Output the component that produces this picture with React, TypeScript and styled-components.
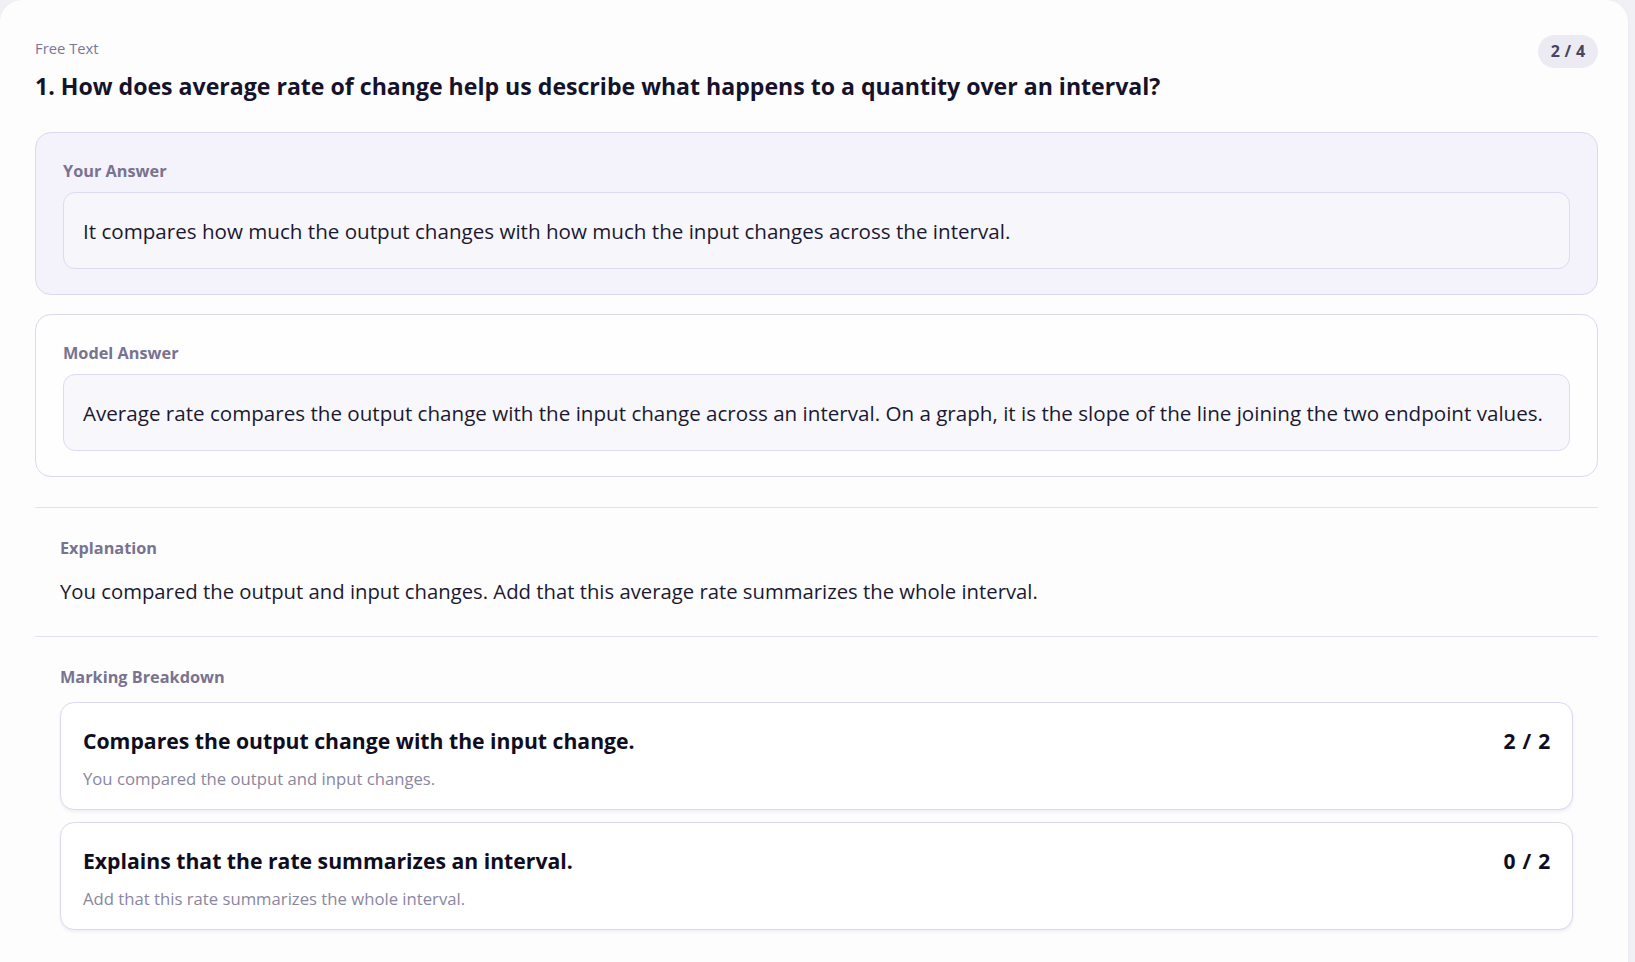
import React from "react";
import styled, { createGlobalStyle } from "styled-components";

const GlobalStyle = createGlobalStyle`
  html, body {
    margin: 0;
    padding: 0;
    background: #f1f1f5;
  }
  body {
    font-family: "Open Sans", "Noto Sans", sans-serif;
    -webkit-font-smoothing: antialiased;
  }
  * { box-sizing: border-box; }
`;

const Card = styled.main`
  width: 1628px;
  min-height: 957px;
  background: #fdfdfe;
  border-radius: 22px;
  padding: 38px 30px 28px 35px;
  box-shadow: 0 1px 4px rgba(40, 30, 90, 0.05);
`;

const Header = styled.header`
  display: flex;
  justify-content: space-between;
  align-items: flex-start;
  margin-bottom: 30px;
`;

const HeaderText = styled.div`
  display: flex;
  flex-direction: column;
  gap: 12px;
`;

const Kind = styled.div`
  font-size: 14.8px;
  line-height: 20px;
  color: #7b7791;
`;

const Title = styled.h1`
  margin: 0;
  font-size: 23.1px;
  line-height: 32px;
  font-weight: 700;
  color: #15122b;
`;

const Badge = styled.span`
  margin-top: -3px;
  height: 33px;
  min-width: 60px;
  padding: 0 12px;
  border-radius: 17px;
  background: #ecebf3;
  color: #48445f;
  font-size: 16px;
  font-weight: 700;
  line-height: 33px;
  text-align: center;
  letter-spacing: 0.3px;
`;

const AnswerCard = styled.section<{ $tinted?: boolean }>`
  border: 1px solid #dcd8f0;
  border-radius: 16px;
  background: ${(p) => (p.$tinted ? "#f4f2fb" : "#fefeff")};
  padding: 27px 27px 25px 27px;
  & + & {
    margin-top: 19px;
  }
`;

const Label = styled.div`
  font-size: 16.3px;
  line-height: 22px;
  font-weight: 700;
  color: #78738f;
`;

const AnswerBox = styled.div<{ $tinted?: boolean }>`
  margin-top: 10px;
  border: 1px solid #dedaf0;
  border-radius: 12px;
  background: ${(p) => (p.$tinted ? "#f7f6fb" : "#f8f7fc")};
  padding: 23.5px 19px;
  font-size: 20.6px;
  line-height: 28px;
  color: #1b1930;
`;

const Divider = styled.hr<{ $flush?: boolean }>`
  margin: ${(p) => (p.$flush ? "0" : "30px 0 0")};
  border: 0;
  border-top: 1px solid #e5e2ef;
`;

const Section = styled.section`
  padding: 29px 25px 31px;
`;

const BodyText = styled.p`
  margin: 18px 0 0;
  font-size: 20.3px;
  line-height: 28px;
  color: #1b1930;
`;

const Criteria = styled.div`
  margin-top: 14px;
  display: flex;
  flex-direction: column;
  gap: 12px;
`;

const Criterion = styled.div`
  border: 1px solid #dcd8ef;
  border-radius: 14px;
  background: #ffffff;
  padding: 24px 21px 19px 22px;
  box-shadow: 0 2px 3px rgba(70, 60, 140, 0.08);
`;

const CriterionHead = styled.div`
  display: flex;
  justify-content: space-between;
  align-items: flex-start;
  gap: 24px;
`;

const CriterionTitle = styled.div`
  font-size: 21.2px;
  line-height: 28px;
  font-weight: 700;
  color: #0f0d20;
`;

const Score = styled.div`
  font-size: 21px;
  line-height: 28px;
  font-weight: 700;
  color: #0f0d20;
  white-space: nowrap;
  letter-spacing: 0.8px;
`;

const CriterionNote = styled.div`
  margin-top: 13px;
  font-size: 16.7px;
  line-height: 22px;
  color: #8a86a0;
`;

const criteria = [
  {
    title: "Compares the output change with the input change.",
    note: "You compared the output and input changes.",
    score: "2 / 2",
  },
  {
    title: "Explains that the rate summarizes an interval.",
    note: "Add that this rate summarizes the whole interval.",
    score: "0 / 2",
  },
];

export default function App() {
  return (
    <>
      <GlobalStyle />
      <Card>
        <Header>
          <HeaderText>
            <Kind>Free Text</Kind>
            <Title>
              1. How does average rate of change help us describe what happens to a quantity over an interval?
            </Title>
          </HeaderText>
          <Badge>2 / 4</Badge>
        </Header>

        <AnswerCard $tinted>
          <Label>Your Answer</Label>
          <AnswerBox $tinted>
            It compares how much the output changes with how much the input changes across the interval.
          </AnswerBox>
        </AnswerCard>
        <AnswerCard>
          <Label>Model Answer</Label>
          <AnswerBox>
            Average rate compares the output change with the input change across an interval. On a graph, it is the
            slope of the line joining the two endpoint values.
          </AnswerBox>
        </AnswerCard>

        <Divider />
        <Section>
          <Label>Explanation</Label>
          <BodyText>
            You compared the output and input changes. Add that this average rate summarizes the whole interval.
          </BodyText>
        </Section>
        <Divider $flush />
        <Section>
          <Label>Marking Breakdown</Label>
          <Criteria>
            {criteria.map((c) => (
              <Criterion key={c.title}>
                <CriterionHead>
                  <CriterionTitle>{c.title}</CriterionTitle>
                  <Score>{c.score}</Score>
                </CriterionHead>
                <CriterionNote>{c.note}</CriterionNote>
              </Criterion>
            ))}
          </Criteria>
        </Section>
      </Card>
    </>
  );
}
